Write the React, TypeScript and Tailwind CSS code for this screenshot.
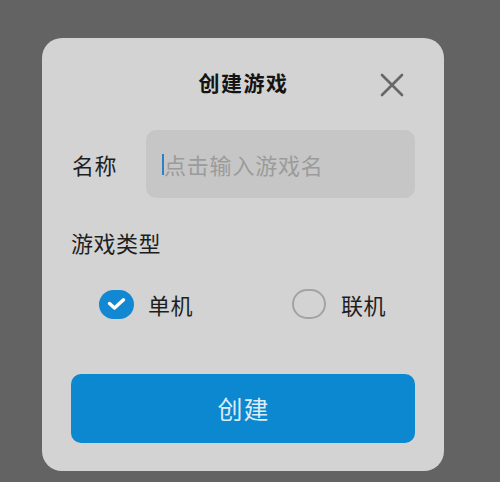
import React from "react";

const font = { fontFamily: '"Noto Sans CJK SC", "Noto Sans", sans-serif' };

export default function App() {
  return (
    <div className="w-[500px] h-[482px] bg-[#636363] pl-[42px] pt-[38px]" style={font}>
      <div className="relative w-[402px] h-[433px] rounded-[20px] bg-[#d3d3d3] px-[29px] flex flex-col">
        <div className="h-[88px] flex items-center justify-center">
          <span className="text-[21px] font-bold tracking-[1.5px] text-[#141414] leading-none pl-[1px]">创建游戏</span>
        </div>
        <button className="absolute left-[337px] top-[34px] w-[26px] h-[26px] flex items-center justify-center">
          <svg width="24" height="24" viewBox="0 0 24 24" fill="none" stroke="#676767" strokeWidth="2.6" strokeLinecap="round">
            <path d="M2 2 L22 22 M22 2 L2 22" />
          </svg>
        </button>
        <div className="mt-[4px] h-[68px] flex items-center">
          <div className="w-[75px] text-[22px] tracking-[0.5px] text-[#1e1e1e] pl-[1px]">名称</div>
          <div className="flex-1 h-full rounded-[10px] bg-[#c6c6c6] flex items-center pl-[16px]">
            <div className="w-[2px] h-[21px] bg-[#2f7fc4]" />
            <span className="text-[22px] tracking-[0.8px] text-[#9b9b9b] leading-none">点击输入游戏名</span>
          </div>
        </div>
        <div className="mt-[32px] h-[24px] flex items-center text-[22px] tracking-[0.5px] text-[#1e1e1e]">游戏类型</div>
        <div className="mt-[32px] h-[36px] flex items-center pl-[28px]">
          <div className="w-[193px] flex items-center">
            <div className="w-[35px] h-[29px] rounded-full bg-[#1388d2] flex items-center justify-center">
              <svg width="19" height="14" viewBox="0 0 19 14" fill="none" stroke="#ffffff" strokeWidth="3.4" strokeLinecap="round" strokeLinejoin="round">
                <path d="M2.5 6.5 L7.5 11 L16.5 2.8" />
              </svg>
            </div>
            <span className="ml-[14px] text-[22px] tracking-[0.5px] text-[#1e1e1e]">单机</span>
          </div>
          <div className="flex items-center">
            <div className="w-[34px] h-[30px] rounded-full border-2 border-[#a3a3a3]" />
            <span className="ml-[15px] text-[22px] tracking-[0.5px] text-[#1e1e1e]">联机</span>
          </div>
        </div>
        <button className="mt-[52px] h-[69px] rounded-[10px] bg-[#0b88cf] flex items-center justify-center">
          <span className="text-[25px] tracking-[1px] text-[#dcebf6] pl-[1px]">创建</span>
        </button>
      </div>
    </div>
  );
}
